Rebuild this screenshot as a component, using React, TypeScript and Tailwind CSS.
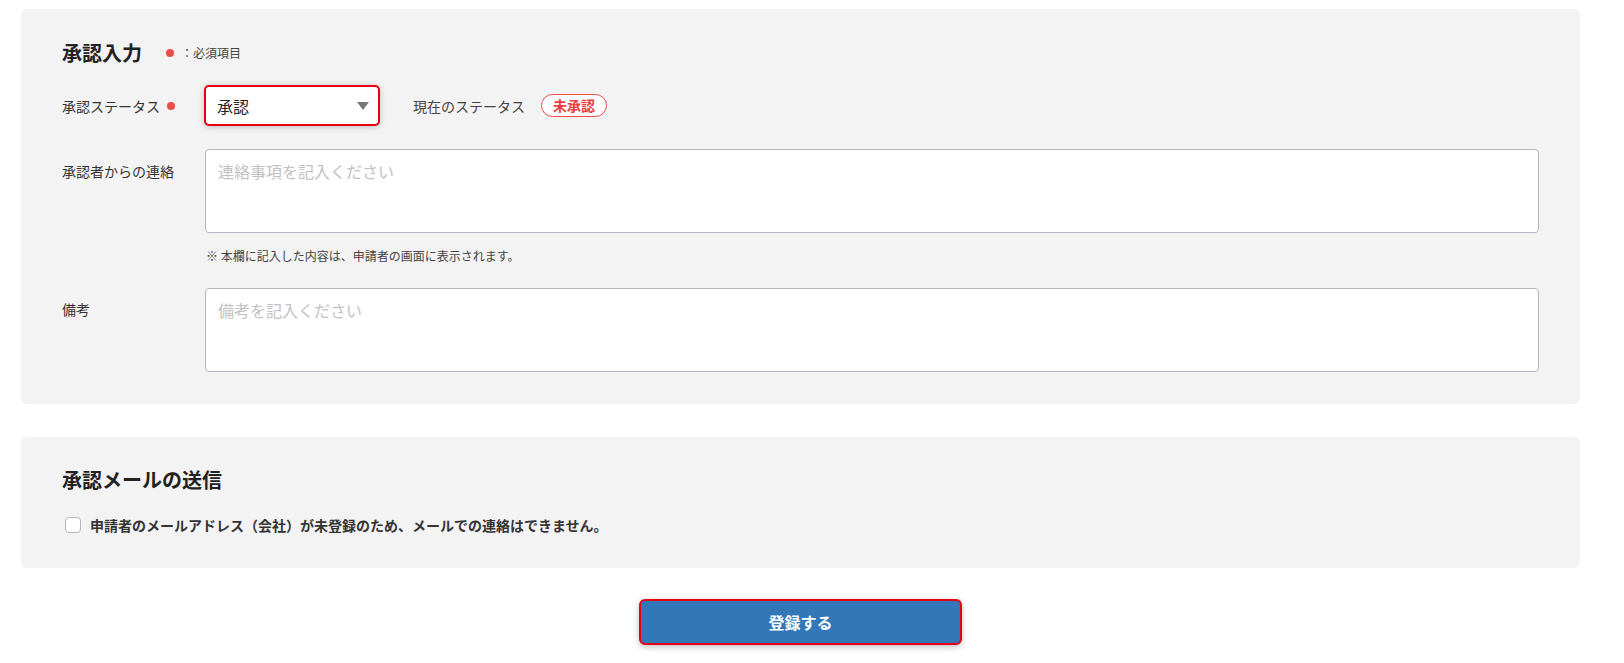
import { useState } from "react";

function RequiredDot({ className = "" }: { className?: string }) {
  return (
    <span
      className={`inline-block w-[8px] h-[8px] rounded-full bg-[#ee4b4b] ${className}`}
    />
  );
}

function App() {
  const [status] = useState("承認");
  const [message, setMessage] = useState("");
  const [memo, setMemo] = useState("");
  const [sendMail, setSendMail] = useState(false);

  return (
    <div className="min-h-screen bg-white font-['Noto_Sans_CJK_JP','Noto_Sans',sans-serif] text-[#333]">
      <div className="pl-[21px] pr-[44px] pt-[9px]">
        {/* 承認入力 */}
        <section className="bg-[#f3f3f3] rounded-[6px] px-[41px] pt-[30px] pb-[32px]">
          <div className="flex items-center h-[28px]">
            <h2 className="text-[20px] leading-[28px] font-bold text-[#222]">
              承認入力
            </h2>
            <RequiredDot className="ml-[24px]" />
            <span className="ml-[7px] text-[12px] leading-[18px] text-[#444]">
              ：必須項目
            </span>
          </div>

          <div className="flex items-center mt-[18px]">
            <div className="w-[142px] flex items-center text-[14px] leading-[20px]">
              <span>承認ステータス</span>
              <RequiredDot className="ml-[7px]" />
            </div>
            <div className="w-[176px] h-[41px] border-2 border-[#e60012] rounded-[5px] bg-white shadow-[0_1px_6px_rgba(0,0,0,0.22)] flex items-center justify-between pl-[11px] pr-[9px]">
              <span className="text-[16px] leading-[24px] text-[#222]">
                {status}
              </span>
              <svg width="12" height="8" viewBox="0 0 12 8">
                <path d="M0 0 H12 L6 8 Z" fill="#777" />
              </svg>
            </div>
            <span className="ml-[33px] text-[14px] leading-[20px] text-[#444]">
              現在のステータス
            </span>
            <span className="ml-[16px] h-[23px] px-[11px] rounded-full border border-[#ee4b4b] bg-white text-[#ee3b3b] text-[14px] font-bold flex items-center">
              未承認
            </span>
          </div>

          <div className="flex mt-[23px]">
            <label className="w-[143px] shrink-0 pt-[12px] text-[14px] leading-[20px]">
              承認者からの連絡
            </label>
            <div className="flex-1">
              <textarea
                value={message}
                onChange={(e) => setMessage(e.target.value)}
                placeholder="連絡事項を記入ください"
                className="block w-full h-[84px] resize-none bg-white border border-[#b3b7c0] rounded-[4px] px-[12px] pt-[9px] text-[16px] leading-[24px] placeholder:text-[#c2c2c2] outline-none"
              />
              <p className="mt-[14px] pl-[1px] text-[12px] leading-[18px] text-[#444]">
                ※ 本欄に記入した内容は、申請者の画面に表示されます。
              </p>
            </div>
          </div>

          <div className="flex mt-[23px]">
            <label className="w-[143px] shrink-0 pt-[11px] text-[14px] leading-[20px]">
              備考
            </label>
            <div className="flex-1">
              <textarea
                value={memo}
                onChange={(e) => setMemo(e.target.value)}
                placeholder="備考を記入ください"
                className="block w-full h-[84px] resize-none bg-white border border-[#b3b7c0] rounded-[4px] px-[12px] pt-[9px] text-[16px] leading-[24px] placeholder:text-[#c2c2c2] outline-none"
              />
            </div>
          </div>
        </section>

        {/* 承認メールの送信 */}
        <section className="mt-[33px] bg-[#f3f3f3] rounded-[6px] px-[41px] pt-[29px] pb-[33px]">
          <h2 className="text-[20px] leading-[28px] font-bold text-[#222]">
            承認メールの送信
          </h2>
          <label className="mt-[21px] flex items-center h-[20px] pl-[3px] cursor-pointer">
            <span
              onClick={() => setSendMail(!sendMail)}
              className={`w-[16px] h-[16px] rounded-[4px] border border-[#b3b7c0] ${
                sendMail ? "bg-[#3277b8]" : "bg-white"
              }`}
            />
            <span className="ml-[9px] text-[14px] leading-[20px] font-bold text-[#333]">
              申請者のメールアドレス（会社）が未登録のため、メールでの連絡はできません。
            </span>
          </label>
        </section>

        <div className="flex justify-center mt-[31px] pb-[18px]">
          <button className="w-[323px] h-[46px] border-2 border-[#e60012] rounded-[6px] bg-[#3277b8] text-white text-[16px] font-bold shadow-[0_2px_6px_rgba(0,0,0,0.25)]">
            登録する
          </button>
        </div>
      </div>
    </div>
  );
}

export default App;
